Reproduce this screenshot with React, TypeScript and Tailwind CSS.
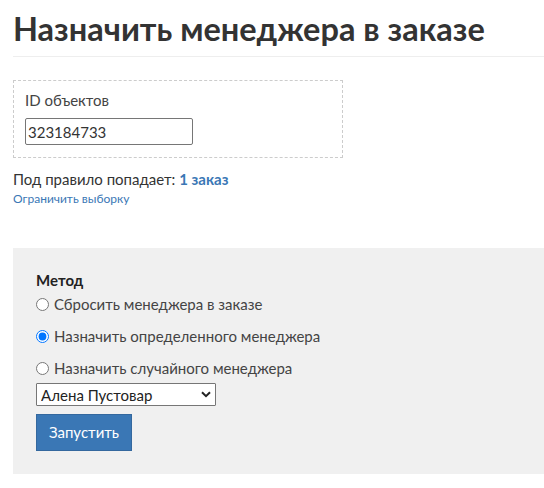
import React, { useState } from "react";

const managers = ["Алена Пустовар", "Игорь Смирнов", "Мария Козлова"];

const methods = [
  { id: "reset", label: "Сбросить менеджера в заказе" },
  { id: "specific", label: "Назначить определенного менеджера" },
  { id: "random", label: "Назначить случайного менеджера" },
];

const App = () => {
  const [ids, setIds] = useState("323184733");
  const [method, setMethod] = useState("specific");
  const [manager, setManager] = useState(managers[0]);

  return (
    <div className="min-h-screen bg-white pl-[13px] text-[#333] [font-family:Lato,'Liberation_Sans',sans-serif]">
      <h1 className="pt-[10px] pb-[9px] text-[32.5px] font-bold leading-[37px] border-b border-[#eee]">
        Назначить менеджера в заказе
      </h1>

      <div className="mt-[23px] w-[330px] h-[78px] border border-dashed border-[#ccc] px-[11px] pt-[9px]">
        <div className="text-[15px] leading-[20px] text-[#444]">ID объектов</div>
        <input
          value={ids}
          onChange={(e) => setIds(e.target.value)}
          className="mt-[8px] w-[168px] h-[27px] border border-[#767676] rounded-[2px] px-[2px] text-[15px] text-[#333] outline-none"
        />
      </div>

      <div className="mt-[11px] text-[15px] leading-[20px]">
        Под правило попадает: <span className="font-bold text-[#3a77b5]">1 заказ</span>
      </div>
      <a href="#" className="block mt-[2px] text-[12px] leading-[16px] text-[#3a77b5]">
        Ограничить выборку
      </a>

      <div className="mt-[41px] h-[226px] bg-[#f0f0f0] pl-[23px] pt-[22px]">
        <div className="text-[15px] font-bold leading-[20px] text-[#222]">Метод</div>
        <div className="flex flex-col gap-[12px] mt-[4px]">
          {methods.map((m) => (
            <label key={m.id} className="flex items-center gap-[5px] text-[15px] leading-[20px] text-[#444]">
              <input
                type="radio"
                name="method"
                checked={method === m.id}
                onChange={() => setMethod(m.id)}
                className="m-0 w-[13px] h-[13px]"
              />
              {m.label}
            </label>
          ))}
        </div>
        <div className="relative mt-[5px] w-[180px]">
          <select
            value={manager}
            onChange={(e) => setManager(e.target.value)}
            className="block appearance-none w-full h-[23px] bg-white border border-[#767676] rounded-[1px] pl-[4px] text-[15px] leading-[20px] text-[#222]"
          >
            {managers.map((name) => (
              <option key={name}>{name}</option>
            ))}
          </select>
          <svg
            className="pointer-events-none absolute right-[5px] top-[8px]"
            width="10"
            height="7"
            viewBox="0 0 10 7"
          >
            <path d="M1 1.2 L5 5.2 L9 1.2" fill="none" stroke="#222" strokeWidth="2" />
          </svg>
        </div>
        <button className="block mt-[8px] w-[96px] h-[37px] bg-[#3a77b5] border border-[#34689e] text-white text-[15px]">
          Запустить
        </button>
      </div>
    </div>
  );
};

export default App;
